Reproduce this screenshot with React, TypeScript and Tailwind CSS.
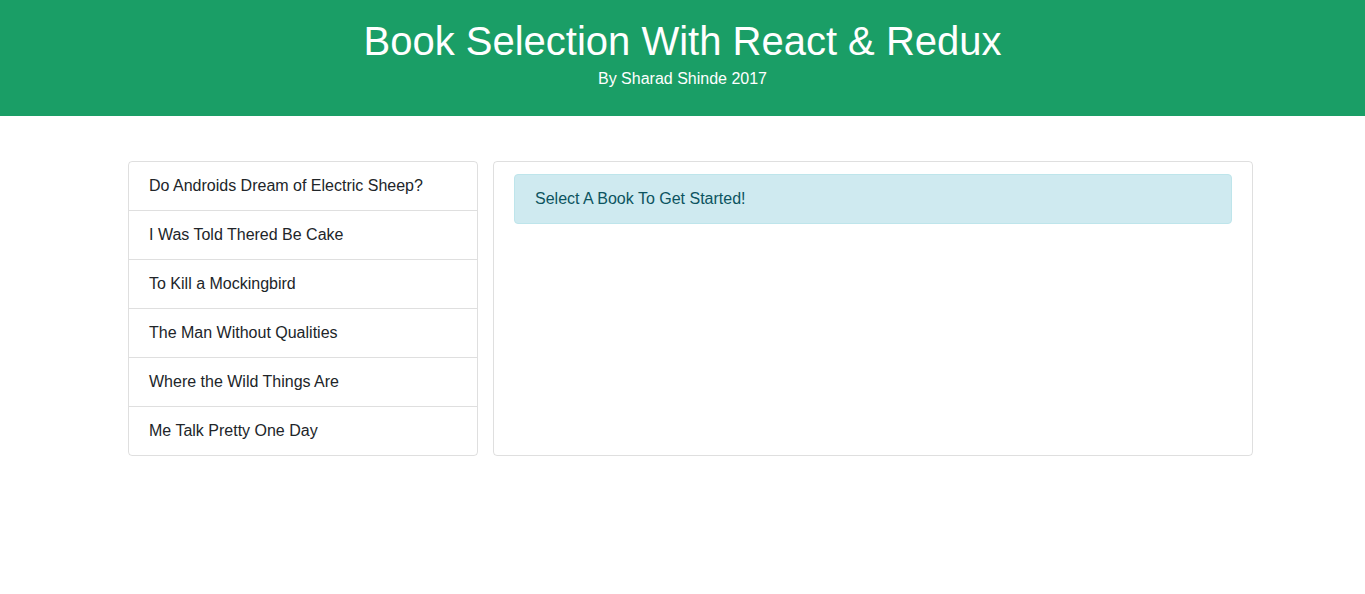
import React from 'react';

const books = [
  'Do Androids Dream of Electric Sheep?',
  'I Was Told Thered Be Cake',
  'To Kill a Mockingbird',
  'The Man Without Qualities',
  'Where the Wild Things Are',
  'Me Talk Pretty One Day',
];

export default function App() {
  return (
    <div className="min-h-[594px] bg-white font-['Liberation_Sans',Arial,sans-serif] text-[#212529]">
      {/* header banner */}
      <header className="bg-[#1a9e66] text-white text-center pt-[17px] pb-[25px]">
        <h1 className="text-[40px] leading-[48px] font-normal">Book Selection With React &amp; Redux</h1>
        <p className="mt-[2px] text-base leading-6">By Sharad Shinde 2017</p>
      </header>

      <main className="mt-[45px] ml-[128px] flex items-stretch gap-[15px]">
        {/* book list */}
        <ul className="w-[350px] border border-black/[.125] rounded">
          {books.map((title, i) => (
            <li
              key={title}
              className={
                'px-5 py-3 text-base leading-6 ' + (i > 0 ? 'border-t border-black/[.125]' : '')
              }
            >
              {title}
            </li>
          ))}
        </ul>

        {/* detail panel */}
        <div className="w-[760px] border border-black/[.125] rounded px-5 pt-3">
          <div className="bg-[#cfeaf0] border border-[#bee5eb] text-[#0c5460] rounded px-5 py-3 text-base leading-6">
            Select A Book To Get Started!
          </div>
        </div>
      </main>
    </div>
  );
}
